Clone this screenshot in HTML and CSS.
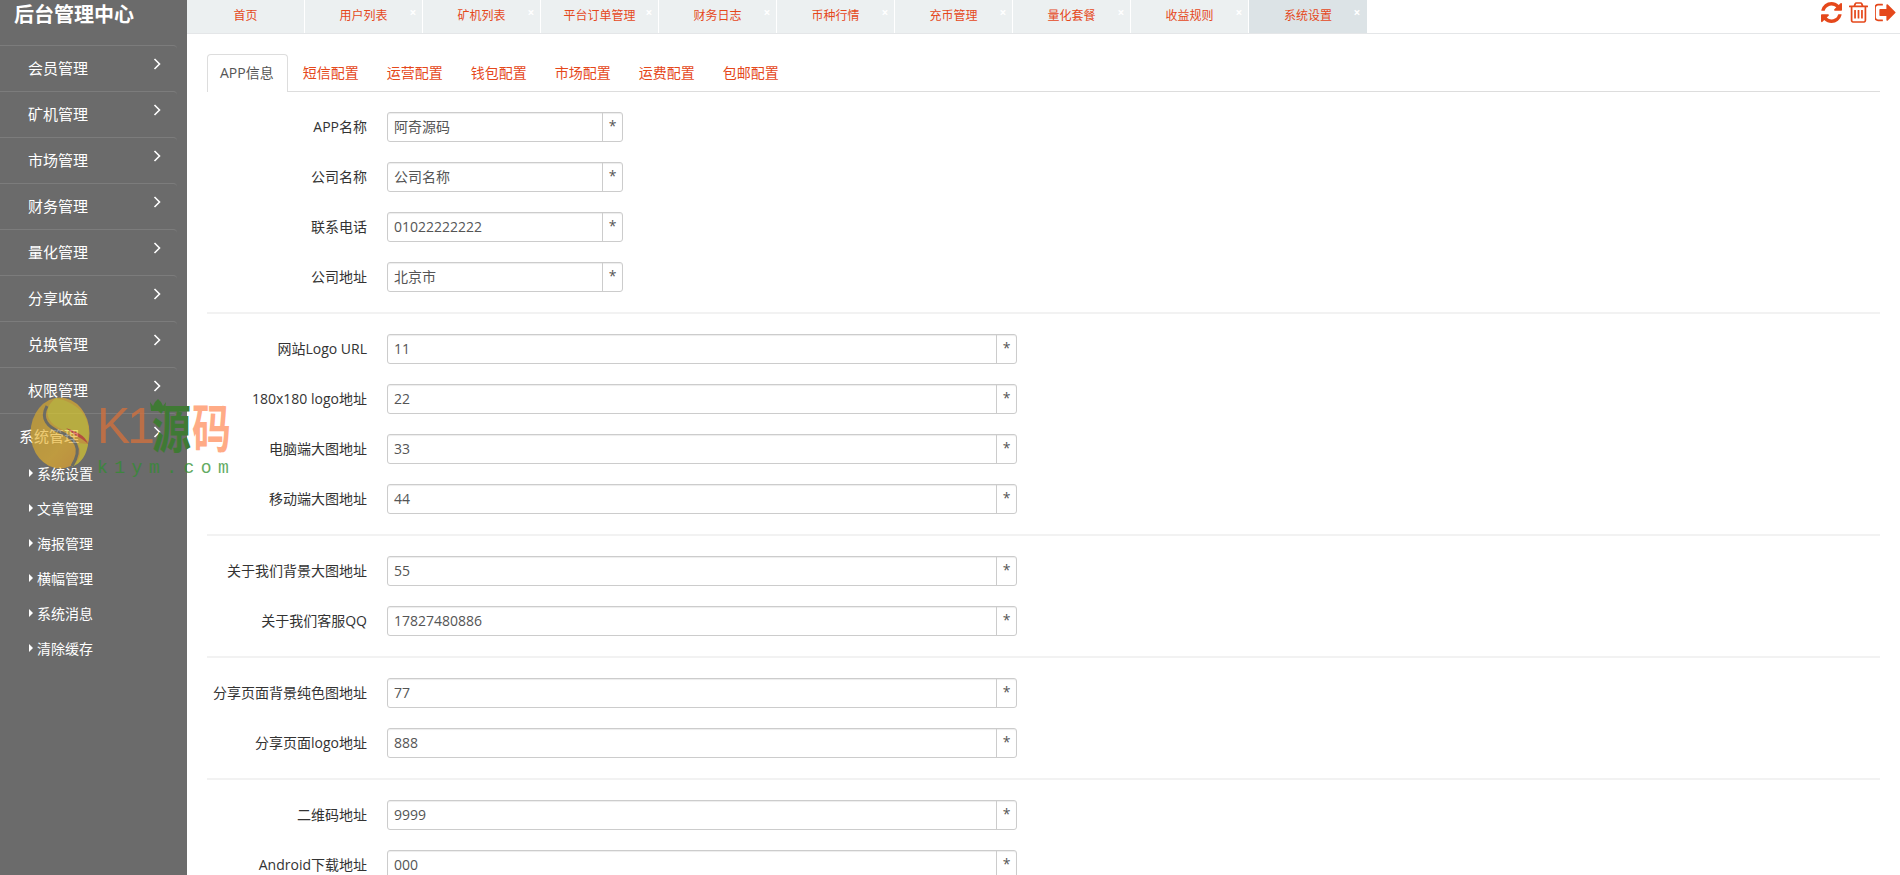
FILE: index.html
```html
<!DOCTYPE html>
<html lang="zh-CN">
<head>
<meta charset="utf-8">
<title>后台管理中心</title>
<link rel="stylesheet" href="styles.css">
</head>
<body>
<div class="app">
  <aside class="sidebar">
    <h1 class="brand">后台管理中心</h1>
    <ul class="menu">
      <li class="menu-item">会员管理<svg class="chev" viewBox="0 0 8 12"><path d="M1.5 1l5 5-5 5"/></svg></li>
      <li class="menu-item">矿机管理<svg class="chev" viewBox="0 0 8 12"><path d="M1.5 1l5 5-5 5"/></svg></li>
      <li class="menu-item">市场管理<svg class="chev" viewBox="0 0 8 12"><path d="M1.5 1l5 5-5 5"/></svg></li>
      <li class="menu-item">财务管理<svg class="chev" viewBox="0 0 8 12"><path d="M1.5 1l5 5-5 5"/></svg></li>
      <li class="menu-item">量化管理<svg class="chev" viewBox="0 0 8 12"><path d="M1.5 1l5 5-5 5"/></svg></li>
      <li class="menu-item">分享收益<svg class="chev" viewBox="0 0 8 12"><path d="M1.5 1l5 5-5 5"/></svg></li>
      <li class="menu-item">兑换管理<svg class="chev" viewBox="0 0 8 12"><path d="M1.5 1l5 5-5 5"/></svg></li>
      <li class="menu-item">权限管理<svg class="chev" viewBox="0 0 8 12"><path d="M1.5 1l5 5-5 5"/></svg></li>
      <li class="menu-item open">系统管理<svg class="chev" viewBox="0 0 8 12"><path d="M1.5 1l5 5-5 5"/></svg></li>
    </ul>
    <ul class="submenu">
      <li>系统设置</li>
      <li>文章管理</li>
      <li>海报管理</li>
      <li>横幅管理</li>
      <li>系统消息</li>
      <li>清除缓存</li>
    </ul>
  </aside>
  <main class="main">
    <header class="topbar">
      <nav class="pages">
        <a class="page">首页</a>
        <a class="page">用户列表<i>×</i></a>
        <a class="page">矿机列表<i>×</i></a>
        <a class="page">平台订单管理<i>×</i></a>
        <a class="page">财务日志<i>×</i></a>
        <a class="page">币种行情<i>×</i></a>
        <a class="page">充币管理<i>×</i></a>
        <a class="page">量化套餐<i>×</i></a>
        <a class="page">收益规则<i>×</i></a>
        <a class="page active">系统设置<i>×</i></a>
      </nav>
      <div class="tools">
        <svg class="tool" width="21" height="21" viewBox="128 128 1536 1536"><path d="M1639 1056q0 5-1 7-64 268-268 434.500t-478 166.500q-146 0-282.500-55t-243.500-157l-129 129q-19 19-45 19t-45-19-19-45v-448q0-26 19-45t45-19h448q26 0 45 19t19 45-19 45l-137 137q71 66 161 102t187 36q134 0 250-65t186-179q11-17 53-117 8-23 30-23h192q13 0 22.500 9.500t9.500 22.500zm25-800v448q0 26-19 45t-45 19h-448q-26 0-45-19t-19-45 19-45l138-138q-148-137-349-137-134 0-250 65t-186 179q-11 17-53 117-8 23-30 23h-199q-13 0-22.500-9.500t-9.500-22.500v-7q65-268 270-434.500t480-166.500q146 0 284 55.500t245 156.500l130-129q19-19 45-19t45 19 19 45z"/></svg>
        <svg class="tool" width="19" height="21" viewBox="192 128 1408 1536"><path d="M704 736v576q0 14-9 23t-23 9h-64q-14 0-23-9t-9-23v-576q0-14 9-23t23-9h64q14 0 23 9t9 23zm256 0v576q0 14-9 23t-23 9h-64q-14 0-23-9t-9-23v-576q0-14 9-23t23-9h64q14 0 23 9t9 23zm256 0v576q0 14-9 23t-23 9h-64q-14 0-23-9t-9-23v-576q0-14 9-23t23-9h64q14 0 23 9t9 23zm128 724v-948h-896v948q0 22 7 40.500t14.500 27 10.500 8.500h832q3 0 10.500-8.500t14.500-27 7-40.500zm-672-1076h448l-48-117q-7-9-17-11h-317q-10 2-17 11zm928 32v64q0 14-9 23t-23 9h-96v948q0 83-47 143.500t-113 60.500h-832q-66 0-113-58.500t-47-141.500v-952h-96q-14 0-23-9t-9-23v-64q0-14 9-23t23-9h309l70-167q15-37 54-63t79-26h320q40 0 79 26t54 63l70 167h309q14 0 23 9t9 23z"/></svg>
        <svg class="tool" width="21" height="21" viewBox="128 128 1536 1536"><path d="M704 1440q0 4 1 20t.5 26.500-3 23.500-10 19.500-20.500 6.500h-320q-119 0-203.500-84.500t-84.500-203.500v-704q0-119 84.500-203.500t203.500-84.500h320q13 0 22.500 9.500t9.500 22.500q0 4 1 20t.5 26.500-3 23.500-10 19.500-20.500 6.500h-320q-66 0-113 47t-47 113v704q0 66 47 113t113 47h312l11.500 1 11.500 3 8 5.500 7 9 2 13.500zm928-544q0 26-19 45l-544 544q-19 19-45 19t-45-19-19-45v-288h-448q-26 0-45-19t-19-45v-384q0-26 19-45t45-19h448v-288q0-26 19-45t45-19 45 19l544 544q19 19 19 45z"/></svg>
      </div>
    </header>
    <section class="content">
      <ul class="tabs">
        <li class="tab current">APP信息</li>
        <li class="tab">短信配置</li>
        <li class="tab">运营配置</li>
        <li class="tab">钱包配置</li>
        <li class="tab">市场配置</li>
        <li class="tab">运费配置</li>
        <li class="tab">包邮配置</li>
      </ul>
      <form class="form">
        <div class="row short"><label>APP名称</label><div class="field"><span class="value">阿奇源码</span><span class="addon">*</span></div></div>
        <div class="row short"><label>公司名称</label><div class="field"><span class="value">公司名称</span><span class="addon">*</span></div></div>
        <div class="row short"><label>联系电话</label><div class="field"><span class="value">01022222222</span><span class="addon">*</span></div></div>
        <div class="row short"><label>公司地址</label><div class="field"><span class="value">北京市</span><span class="addon">*</span></div></div>
        <hr class="rule">
        <div class="row"><label>网站Logo URL</label><div class="field"><span class="value">11</span><span class="addon">*</span></div></div>
        <div class="row"><label>180x180 logo地址</label><div class="field"><span class="value">22</span><span class="addon">*</span></div></div>
        <div class="row"><label>电脑端大图地址</label><div class="field"><span class="value">33</span><span class="addon">*</span></div></div>
        <div class="row"><label>移动端大图地址</label><div class="field"><span class="value">44</span><span class="addon">*</span></div></div>
        <hr class="rule">
        <div class="row"><label>关于我们背景大图地址</label><div class="field"><span class="value">55</span><span class="addon">*</span></div></div>
        <div class="row"><label>关于我们客服QQ</label><div class="field"><span class="value">17827480886</span><span class="addon">*</span></div></div>
        <hr class="rule">
        <div class="row"><label>分享页面背景纯色图地址</label><div class="field"><span class="value">77</span><span class="addon">*</span></div></div>
        <div class="row"><label>分享页面logo地址</label><div class="field"><span class="value">888</span><span class="addon">*</span></div></div>
        <hr class="rule">
        <div class="row"><label>二维码地址</label><div class="field"><span class="value">9999</span><span class="addon">*</span></div></div>
        <div class="row"><label>Android下载地址</label><div class="field"><span class="value">000</span><span class="addon">*</span></div></div>
      </form>
    </section>
  </main>
</div>
<div class="watermark">
  <svg class="wm-mark" width="60" height="72" viewBox="0 0 60 72">
    <defs>
      <linearGradient id="wmGold" x1="0" y1="0" x2="1" y2="1">
        <stop offset="0" stop-color="#d9a92a"/>
        <stop offset="0.6" stop-color="#ecb52a"/>
        <stop offset="1" stop-color="#e89a2a"/>
      </linearGradient>
    </defs>
    <ellipse cx="30" cy="36" rx="29.500" ry="35.500" fill="url(#wmGold)"/>
    <path d="M26 1C16 8 14 20 24 28 36 36 50 38 58 44 61 30 58 8 26 1z" fill="#e0cf2c"/>
    <path d="M47 46C53 54 50 64 41 70 52 67 57 56 58 47z" fill="#e0cf2c"/>
    <path d="M36 31C47 35 55 38 58 47 54 42 46 40 36 31z" fill="#d8402a"/>
    <path d="M17 9C10 22 18 30 30 35 44 41 54 50 42 69" fill="none" stroke="#6b6b60" stroke-width="3"/>
  </svg>
  <svg class="wm-crown" width="16" height="12" viewBox="0 0 16 12"><path d="M0 3l3 4 2-4 3-3 3 3 2 4 3-4-1 9H1z" fill="#3f7a34"/></svg>
  <span class="wm-k">K1</span><span class="wm-yuan">源</span><span class="wm-ma">码</span>
  <span class="wm-url">k1ym.com</span>
</div>
</body>
</html>
```

FILE: styles.css
```css
* { box-sizing: border-box; }
html, body { margin: 0; height: 100%; overflow: hidden; background: #fff; }
body { font-family: "Open Sans", "Noto Sans CJK SC", sans-serif; font-size: 14px; color: #333; }
ul { list-style: none; margin: 0; padding: 0; }
.app { display: flex; height: 875px; }

.sidebar { flex: 0 0 187px; background: #6b6b6b; color: #fff; }
.brand { margin: 0; height: 45px; padding: 3px 0 0 14px; font-size: 20px; line-height: 24px; font-weight: 700; }
.menu-item { position: relative; height: 46px; width: 177px; padding: 11px 0 0 28px; font-size: 15px; line-height: 22px; border-top: 1px solid #7c7c7c; border-top-right-radius: 4px; }
.menu-item.open { height: 43px; padding: 11px 0 0 19px; }
.chev { position: absolute; left: 153px; top: 12px; width: 8px; height: 12px; fill: none; stroke: #fff; stroke-width: 1.600; }
.submenu li { position: relative; height: 35px; padding-left: 37px; font-size: 14px; line-height: 35px; }
.submenu li::before { content: ""; position: absolute; left: 29px; top: 13px; border-left: 4px solid #fff; border-top: 4px solid transparent; border-bottom: 4px solid transparent; }

.main { flex: 1; min-width: 0; display: flex; flex-direction: column; }
.topbar { flex: 0 0 34px; display: flex; justify-content: space-between; border-bottom: 1px solid #e4e6e8; }
.pages { display: flex; }
.page { position: relative; width: 118px; height: 33px; background: #ecf0f1; border-right: 1px solid #fff; color: #e5481b; font-size: 12px; line-height: 32px; text-align: center; }
.page i { position: absolute; left: 103px; top: 7px; width: 10px; font-style: normal; font-weight: 700; font-size: 12px; line-height: 12px; color: #fff; }
.page.active { background: #dce3e6; border-right: 0; }
.tools { display: flex; align-items: flex-start; gap: 7px; padding: 2px 4px 0 0; }
.tool { display: block; fill: #e5481b; }

.content { padding: 20px 20px 0; }
.tabs { display: flex; height: 38px; border-bottom: 1px solid #ddd; }
.tab { height: 38px; padding: 0 12px; margin-right: 2px; font-size: 14px; line-height: 36px; color: #e5481b; border: 1px solid transparent; border-bottom: 0; border-radius: 4px 4px 0 0; }
.tab.current { color: #555; background: #fff; border-color: #ddd; padding-right: 13px; }

.form { padding-top: 20px; }
.row { display: flex; align-items: center; height: 30px; margin-bottom: 20px; }
.row label { flex: 0 0 160px; text-align: right; font-size: 14px; line-height: 20px; color: #333; }
.field { display: flex; width: 630px; height: 30px; margin-left: 20px; border: 1px solid #ccc; border-radius: 3px; box-shadow: inset 0 1px 1px rgba(0,0,0,.075); }
.row.short .field { width: 236px; }
.value { flex: 1; padding: 0 6px; font-size: 14px; line-height: 28px; color: #555; }
.addon { flex: 0 0 20px; border-left: 1px solid #ccc; text-align: center; font-size: 14px; line-height: 26px; color: #555; }
.rule { height: 2px; margin: 0 0 20px; border: 0; background: #f2f2f2; }

.watermark { position: absolute; left: 0; top: 0; width: 0; height: 0; pointer-events: none; }
.wm-mark { position: absolute; left: 30px; top: 397px; opacity: .65; }
.wm-crown { position: absolute; left: 150px; top: 399px; }
.wm-k, .wm-yuan, .wm-ma { position: absolute; line-height: 60px; white-space: nowrap; }
.wm-k { left: 97px; top: 396px; font-size: 50px; letter-spacing: -3px; font-family: "Liberation Sans", sans-serif; color: #d0703f; opacity: .8; }
.wm-yuan, .wm-ma { top: 395px; font-size: 39px; font-weight: 700; font-family: "Noto Sans CJK SC", sans-serif; transform: scale(1, 1.33); }
.wm-yuan { left: 152px; color: #3f7a34; }
.wm-ma { left: 192px; color: #ffab86; }
.wm-url { position: absolute; left: 97px; top: 458px; font-family: "Liberation Mono", monospace; font-size: 18px; line-height: 20px; letter-spacing: 6.500px; color: #2f8f2f; opacity: .75; white-space: nowrap; }
```
